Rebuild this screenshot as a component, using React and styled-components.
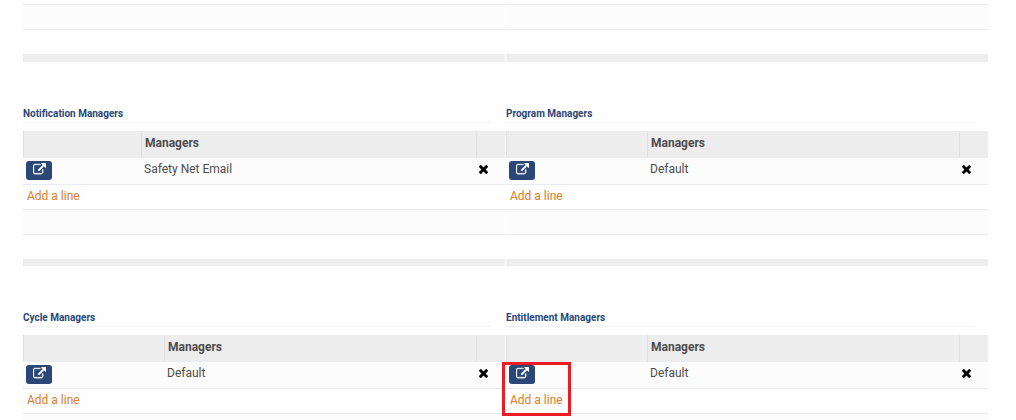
import React from "react";
import styled, { createGlobalStyle } from "styled-components";

const GlobalStyle = createGlobalStyle`
  body {
    margin: 0;
    background: #fefefe;
    color: #4c4c4c;
    font-family: Roboto, "Liberation Sans", sans-serif;
    font-size: 12px;
    line-height: 16px;
  }
  *, *::before, *::after { box-sizing: border-box; }
`;

const Page = styled.main`
  height: 100vh;
  overflow: hidden;
  padding: 0 28px 0 23px;
`;

const PanelGrid = styled.div`
  display: grid;
  grid-template-columns: 1fr 1fr;
  column-gap: 1px;
`;

const Panel = styled.section`
  min-width: 0;
  padding-top: ${(p) => (p.$untitled ? 0 : 44)}px;
`;

const PanelTitle = styled.h2`
  height: 17px;
  margin: 0 14px 8px 0;
  border-bottom: 1px solid #f4f4f4;
  color: #2a4778;
  font-size: 10px;
  font-weight: 700;
  line-height: 16px;
`;

const TableArea = styled.div`
  position: relative;
`;

const LineTable = styled.table`
  width: 100%;
  table-layout: fixed;
  border-collapse: separate;
  border-spacing: 0;
`;

const HeadCell = styled.th`
  width: ${(p) => (p.$width ? `${p.$width}px` : "auto")};
  height: 27px;
  padding: 0 3px 2px;
  border-left: 1px solid #dfdfdf;
  border-bottom: 1px solid #e9ecef;
  background: #ededed;
  font-weight: 700;
  text-align: left;
`;

const PlainHeadCell = styled.td`
  width: ${(p) => p.$width}px;
  height: 27px;
  padding: 0;
  border-left: 1px solid #dfdfdf;
  border-bottom: 1px solid #e9ecef;
  background: #ededed;
`;

const Row = styled.tr`
  background: ${(p) => (p.$shaded ? "#fcfcfc" : "#fefefe")};
`;

const Cell = styled.td`
  height: ${(p) => p.$height || 25}px;
  padding: ${(p) => p.$top || 0}px 3px 0;
  border-bottom: ${(p) => (p.$last ? 0 : 1)}px solid #e9ecef;
  vertical-align: top;
`;

const FootCell = styled.td`
  height: ${(p) => p.$height}px;
  padding: 0;
  background: #ededed;
`;

const OpenButton = styled.button`
  display: flex;
  align-items: flex-start;
  justify-content: center;
  width: 26px;
  height: 19px;
  padding: 2px 0 0;
  border: 0;
  border-radius: 3px;
  background: #2a4778;
  color: #fff;
  cursor: pointer;
`;

const RemoveButton = styled.button`
  display: flex;
  align-items: center;
  height: 16px;
  padding: 0;
  border: 0;
  background: none;
  color: #000;
  cursor: pointer;
`;

const AddLink = styled.a`
  display: inline-block;
  padding-left: 1px;
  color: #e07b28;
  text-decoration: none;
`;

const Highlight = styled.div`
  position: absolute;
  top: 27px;
  left: -4px;
  width: 69px;
  height: 54px;
  border: 3px solid #ed1c24;
  pointer-events: none;
`;

const OpenIcon = () => (
  <svg width="13" height="13" viewBox="0 0 1792 1792" fill="currentColor" stroke="currentColor" strokeWidth="50" aria-hidden="true">
    <path d="M1408 928v320q0 119-84.5 203.5t-203.5 84.5h-832q-119 0-203.5-84.5t-84.5-203.5v-832q0-119 84.5-203.5t203.5-84.5h704q14 0 23 9t9 23v64q0 14-9 23t-23 9h-704q-66 0-113 47t-47 113v832q0 66 47 113t113 47h832q66 0 113-47t47-113v-320q0-14 9-23t23-9h64q14 0 23 9t9 23zm384-864v512q0 26-19 45t-45 19-45-19l-176-176-652 652q-10 10-23 10t-23-10l-114-114q-10-10-10-23t10-23l652-652-176-176q-19-19-19-45t19-45 45-19h512q26 0 45 19t19 45z" />
  </svg>
);

const RemoveIcon = () => (
  <svg width="9" height="9" viewBox="302 366 1188 1188" fill="currentColor" aria-hidden="true">
    <path d="M1490 1322q0 40-28 68l-136 136q-28 28-68 28t-68-28l-294-294-294 294q-28 28-68 28t-68-28l-136-136q-28-28-28-68t28-68l294-294-294-294q-28-28-28-68t28-68l136-136q28-28 68-28t68 28l294 294 294-294q28-28 68-28t68 28l136 136q28 28 28 68t-28 68l-294 294 294 294q28 28 28 68z" />
  </svg>
);

function EmptyLines() {
  return (
    <LineTable>
      <tbody>
        <Row><Cell $height={5} /></Row>
        <Row $shaded><Cell /></Row>
        <Row><Cell $height={24} $last /></Row>
      </tbody>
      <tfoot><tr><FootCell $height={8} /></tr></tfoot>
    </LineTable>
  );
}

function ManagerPanel({ title, name, openWidth = 141, highlighted }) {
  return (
    <Panel>
      <PanelTitle>{title}</PanelTitle>
      <TableArea>
        <LineTable>
          <thead>
            <tr>
              <PlainHeadCell $width={openWidth} />
              <HeadCell scope="col">Managers</HeadCell>
              <PlainHeadCell $width={29} />
            </tr>
          </thead>
          <tbody>
            <Row $shaded>
              <Cell $height={27} $top={3}>
                <OpenButton type="button" aria-label={`Open ${name}`}><OpenIcon /></OpenButton>
              </Cell>
              <Cell $height={27} $top={3}>{name}</Cell>
              <Cell $height={27} $top={3}>
                <RemoveButton type="button" aria-label={`Remove ${name}`}><RemoveIcon /></RemoveButton>
              </Cell>
            </Row>
            <Row>
              <Cell colSpan={3} $top={3}><AddLink href="#add">Add a line</AddLink></Cell>
            </Row>
            <Row $shaded><Cell colSpan={3} /></Row>
            <Row><Cell colSpan={3} $height={24} $last /></Row>
          </tbody>
          <tfoot><tr><FootCell colSpan={3} $height={7} /></tr></tfoot>
        </LineTable>
        {highlighted && <Highlight />}
      </TableArea>
    </Panel>
  );
}

export default function App() {
  return (
    <>
      <GlobalStyle />
      <Page>
        <PanelGrid>
          <Panel $untitled><EmptyLines /></Panel>
          <Panel $untitled><EmptyLines /></Panel>
          <ManagerPanel title="Notification Managers" name="Safety Net Email" openWidth={118} />
          <ManagerPanel title="Program Managers" name="Default" />
          <ManagerPanel title="Cycle Managers" name="Default" />
          <ManagerPanel title="Entitlement Managers" name="Default" highlighted />
        </PanelGrid>
      </Page>
    </>
  );
}
